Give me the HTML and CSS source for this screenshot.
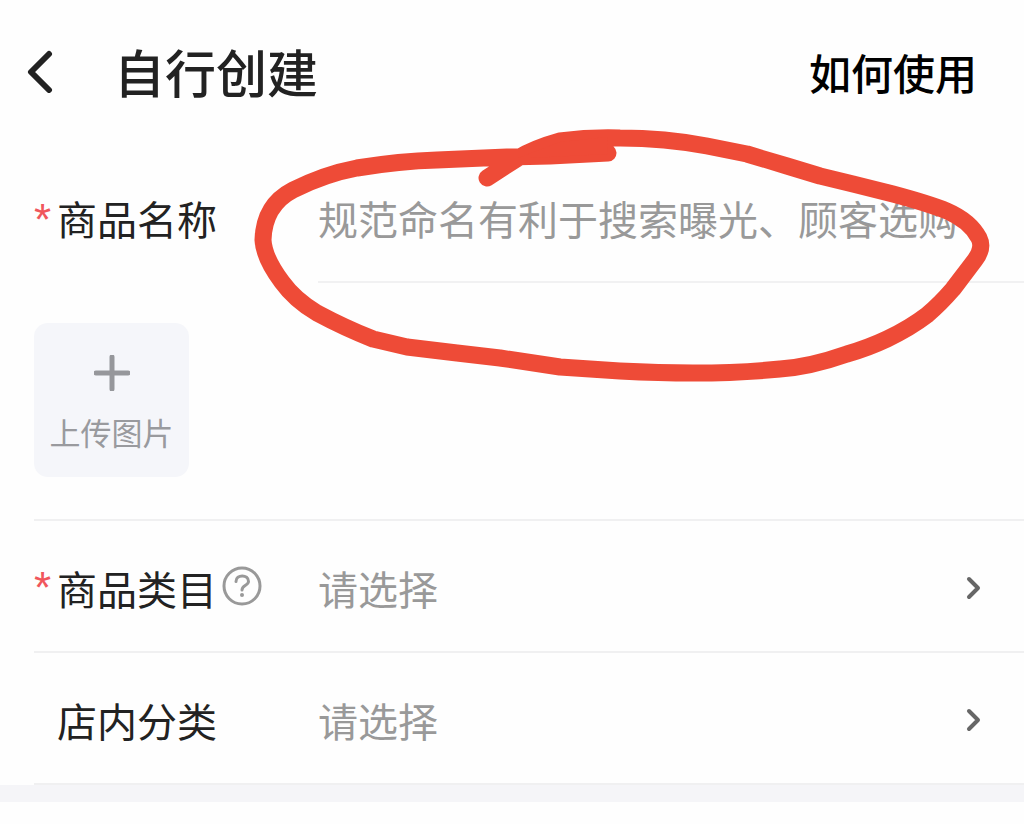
FILE: index.html
```html
<!DOCTYPE html>
<html lang="zh-CN">
<head>
<meta charset="utf-8">
<meta name="viewport" content="width=device-width, initial-scale=1">
<title>自行创建</title>
<link rel="stylesheet" href="styles.css">
</head>
<body>
<header class="topbar">
  <button class="back" type="button" aria-label="返回">
    <svg width="28" height="44" viewBox="0 0 28 44"><path d="M23 5 5 23 23 41"/></svg>
  </button>
  <h1 class="title">自行创建</h1>
  <a class="help-link" href="#">如何使用</a>
</header>
<form class="form">
  <div class="row name-row">
    <span class="star">*</span>
    <label class="label" for="name">商品名称</label>
    <div class="field"><input id="name" class="control" type="text" placeholder="规范命名有利于搜索曝光、顾客选购"></div>
  </div>
  <div class="upload-row">
    <button class="upload" type="button">
      <svg width="36" height="36" viewBox="0 0 36 36"><path d="M18 2V34M2 18H34"/></svg>
      <span>上传图片</span>
    </button>
  </div>
  <div class="row ruled">
    <span class="star">*</span>
    <label class="label" for="category">商品类目</label>
    <button class="hint" type="button" aria-label="说明">
      <svg width="40" height="40" viewBox="0 0 40 40"><circle cx="20" cy="20" r="18"/><path d="M14 15.500C14 8 26.500 8 26.500 15.500C26.500 19.500 20 19 20 24"/><circle class="dot" cx="20" cy="29" r="2"/></svg>
    </button>
    <div class="field">
      <select id="category" class="control"><option>请选择</option></select>
      <svg class="chevron" width="16" height="24" viewBox="0 0 16 24"><path d="M3 3 12 12 3 21"/></svg>
    </div>
  </div>
  <div class="row ruled">
    <span class="star"></span>
    <label class="label" for="group">店内分类</label>
    <div class="field">
      <select id="group" class="control"><option>请选择</option></select>
      <svg class="chevron" width="16" height="24" viewBox="0 0 16 24"><path d="M3 3 12 12 3 21"/></svg>
    </div>
  </div>
  <svg class="marker" width="1024" height="300" viewBox="0 100 1024 300" aria-hidden="true">
    <path d="M487 178L518 158Q535 148 560 141Q590 137 620 138Q665 138 707 146L747 154L787 166L820 176L853 184L893 194Q930 204 947 211Q970 221 979 238Q984 248 975 260L953 289Q940 304 927 315Q910 328 887 339Q868 348 847 354Q810 367 780 369Q740 373 693 373Q660 373 620 371L560 367L500 358L457 353L407 347L373 339Q345 328 317 313Q295 300 282 282Q264 258 263 240Q264 205 293 190Q325 174 357 168Q400 161 437 160L507 157L550 156L608 153"/>
    <path class="fill" d="M518 158 560 142 607 137 608 154 530 158Z"/>
  </svg>
</form>
<div class="divider"></div>
</body>
</html>
```
FILE: styles.css
```css
* { box-sizing: border-box; }
body {
  margin: 0;
  background: #fefefe;
  color: #222;
  font-family: "Noto Sans CJK SC", sans-serif;
  font-size: 40px;
}
button, input, select { font: inherit; color: inherit; border: 0; background: none; padding: 0; margin: 0; }
svg { fill: none; stroke-linecap: round; stroke-linejoin: round; display: block; }
.topbar {
  display: flex;
  align-items: center;
  height: 148px;
  padding: 0 47px 6px 26px;
}
.back { stroke: #222; stroke-width: 6; width: 88px; }
.title {
  flex: 1;
  margin: 0;
  font-size: 51px;
  line-height: 72px;
  font-weight: 500;
}
.help-link { color: #000; font-size: 42px; font-weight: 500; text-decoration: none; }
.form { position: relative; padding-left: 34px; }
.row { display: flex; align-items: center; height: 132px; padding-top: 4px; }
.ruled, .upload-row { border-bottom: 2px solid #f0f0f1; }
.name-row { align-items: stretch; height: 135px; padding-top: 0; line-height: 140px; }
.name-row .field { border-bottom: 2px solid #f1f1f2; padding: 6px 0 0; }
.star { width: 23px; flex: none; color: #f0565c; font: 44px/60px "Liberation Sans", sans-serif; }
.name-row .star { padding-top: 42px; }
.label { width: 160px; flex: none; }
.hint { width: 40px; margin: 0 0 4px 5px; stroke: #999; stroke-width: 3; }
.field { flex: 1; display: flex; align-items: center; min-width: 0; margin-left: 101px; padding-right: 42px; }
.hint + .field { margin-left: 56px; }
.control { flex: 1; min-width: 0; appearance: none; color: #999; outline: 0; height: 60px; }
.control::placeholder { color: #999; opacity: 1; }
.chevron { stroke: #666; stroke-width: 4; }
.upload-row { padding: 40px 0 42px; }
.upload {
  display: flex;
  flex-direction: column;
  align-items: center;
  gap: 18px;
  width: 155px;
  height: 154px;
  padding-bottom: 2px;
  padding-top: 32px;
  border-radius: 14px;
  background: #f5f6fa;
  color: #999a9e;
  font-size: 31px;
  line-height: 46px;
}
.upload svg { stroke: #96979b; stroke-width: 5; }
.marker { position: absolute; left: 0; top: -48px; stroke: #ee4b37; stroke-width: 17; pointer-events: none; }
.marker .fill { fill: #ee4b37; stroke-width: 1; }
.hint .dot { fill: #999; stroke: none; }
.divider { height: 17px; background: #f5f5f8; }
```
